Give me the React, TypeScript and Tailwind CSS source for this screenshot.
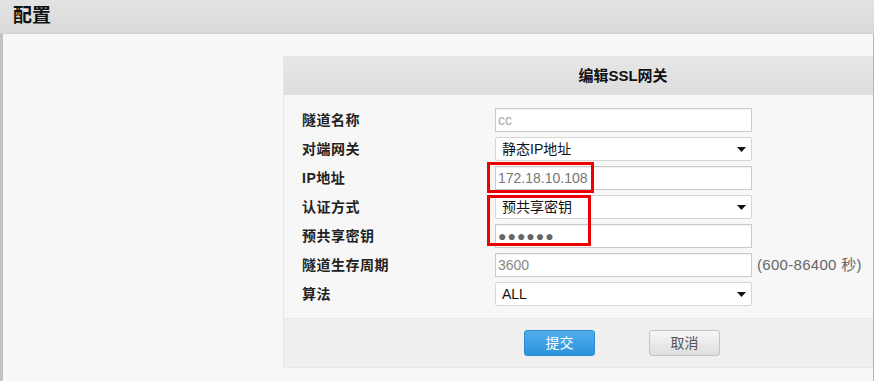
import React from "react";

const cjk = { fontFamily: '"Liberation Sans", "Noto Sans CJK SC", sans-serif' };

type Row = {
  label: string;
  kind: "input" | "select";
  value: string;
  tone?: string;
  hint?: string;
};

const rows: Row[] = [
  { label: "隧道名称", kind: "input", value: "cc", tone: "text-[#a8a8a8] text-[12px]" },
  { label: "对端网关", kind: "select", value: "静态IP地址" },
  { label: "IP地址", kind: "input", value: "172.18.10.108", tone: "text-[#777]" },
  { label: "认证方式", kind: "select", value: "预共享密钥" },
  { label: "预共享密钥", kind: "input", value: "●●●●●●", tone: "text-[#666] text-[10px] tracking-[1px]" },
  { label: "隧道生存周期", kind: "input", value: "3600", tone: "text-[#888]", hint: "(600-86400 秒)" },
  { label: "算法", kind: "select", value: "ALL" },
];

function Field({ row }: { row: Row }) {
  if (row.kind === "select") {
    return (
      <div className="flex h-[24px] w-[257px] items-center justify-between rounded-[2px] border border-[#d6d6d6] bg-white pl-[6px] pr-[5px] text-[14px] text-[#111]">
        <span>{row.value}</span>
        <svg width="9" height="5" viewBox="0 0 9 5">
          <path d="M0 0 L9 0 L4.5 5 Z" fill="#111" />
        </svg>
      </div>
    );
  }
  return (
    <div className={`flex h-[24px] w-[257px] items-center border border-[#c9c9c9] bg-white pl-[2px] text-[14px] shadow-[inset_0_1px_1px_rgba(0,0,0,0.06)] ${row.tone ?? ""}`}>
      {row.value}
    </div>
  );
}

export default function App() {
  return (
    <div className="flex h-[381px] w-[874px] flex-col overflow-hidden bg-[#f7f7f7]" style={cjk}>
      <div className="flex h-[34px] shrink-0 items-center border-b border-[#d2d2d2] bg-gradient-to-b from-[#e3e3e3] to-[#d9d9d9] pl-[13px]">
        <span className="text-[19px] font-bold text-[#111]">配置</span>
      </div>

      <div className="flex flex-1">
        <div className="w-[3px] bg-[#c2c2c2]" />
        <div className="flex-1 overflow-hidden pl-[280px] pt-[22px]">
          <div className="relative w-[680px] border border-[#e6e6e6]">
            <div className="flex h-[38px] items-center justify-center border-b border-[#e2e2e2] bg-gradient-to-b from-[#e7e7e7] to-[#dddddd] pt-[1px] text-[15px] font-bold text-[#111]">
              编辑SSL网关
            </div>

            <div className="flex flex-col gap-[5px] pb-[12px] pt-[13px]">
              {rows.map((row) => (
                <div key={row.label} className="flex h-[24px] items-center pl-[18px]">
                  <div className="w-[193px] text-[14px] font-bold tracking-[0.5px] text-[#222]">
                    {row.label}
                  </div>
                  <Field row={row} />
                  {row.hint && (
                    <span className="ml-[5px] text-[15px] tracking-[0.3px] text-[#666]">{row.hint}</span>
                  )}
                </div>
              ))}
            </div>

            <div className="flex h-[49px] items-center border-t border-[#e6e6e6] bg-[#efefef] pl-[240px]">
              <button className="h-[26px] w-[71px] rounded-[3px] border border-[#2b8bd2] bg-gradient-to-b from-[#52aeea] to-[#2b93dc] text-[14px] text-white">
                提交
              </button>
              <button className="ml-[54px] h-[26px] w-[71px] rounded-[3px] border border-[#c4c4c4] bg-gradient-to-b from-[#f7f7f7] to-[#dedede] text-[14px] text-[#555]">
                取消
              </button>
            </div>

            <div className="pointer-events-none absolute left-[203px] top-[105px] h-[31px] w-[107px] border-[3px] border-[#ee0000]" />
            <div className="pointer-events-none absolute left-[203px] top-[138px] h-[51px] w-[104px] border-[3px] border-[#ee0000]" />
          </div>
        </div>
        <div className="w-px bg-[#b5b5b5]" />
      </div>
    </div>
  );
}
